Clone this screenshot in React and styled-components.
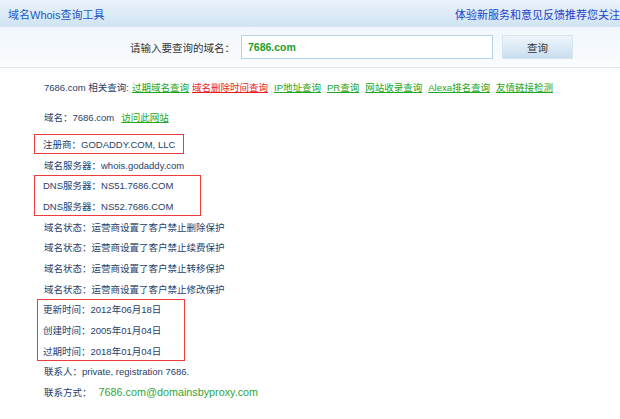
import React from "react";
import styled, { createGlobalStyle } from "styled-components";

const Global = createGlobalStyle`
  html, body { margin: 0; padding: 0; background: #ffffff; }
  body { font-family: "Liberation Sans", "Noto Sans CJK SC", Arial, sans-serif; }
`;

const Page = styled.div`
  width: 620px;
  height: 419px;
  overflow: hidden;
  background: #ffffff;
`;

const Header = styled.div`
  height: 27px;
  display: flex;
  align-items: center;
  justify-content: space-between;
  padding-left: 8px;
  background: linear-gradient(#eaf3fa, #cfe3f2);
  font-size: 11px;
  white-space: nowrap;
  overflow: hidden;
`;

const Title = styled.span`
  color: #2456c8;
`;

const Promo = styled.span`
  color: #1d3fd0;
`;

const SearchRow = styled.div`
  height: 40px;
  display: flex;
  align-items: center;
  background: linear-gradient(#f1f7fc, #fafcfe);
  border-bottom: 1px solid #e2eaf1;
`;

const Label = styled.label`
  width: 235px;
  text-align: right;
  font-size: 10.5px;
  color: #333333;
`;

const Input = styled.div`
  box-sizing: border-box;
  width: 252px;
  height: 24px;
  margin-left: 6px;
  padding-left: 6px;
  display: flex;
  align-items: center;
  background: #ffffff;
  border: 1px solid #b4d2e8;
  color: #1e9e1e;
  font-weight: bold;
  font-size: 10.5px;
`;

const Button = styled.button`
  box-sizing: border-box;
  width: 71px;
  height: 24px;
  margin-left: 9px;
  border: 1px solid #d6e5f1;
  background: linear-gradient(#eef5fb, #c9def0);
  color: #333333;
  font-family: inherit;
  font-size: 10.5px;
  padding: 0;
`;

const Content = styled.div`
  padding: 9px 0 0 44px;
  font-size: 9.5px;
  color: #1f3e6a;
`;

const Row = styled.div`
  height: 20.67px;
  display: flex;
  align-items: center;
  white-space: nowrap;
  margin-bottom: ${(p) => p.$after || 0}px;
`;

const Link = styled.a`
  color: ${(p) => (p.$red ? "#e81c1c" : "#22a522")};
  text-decoration: underline;
  margin-left: ${(p) => p.$gap ?? 6}px;
  cursor: pointer;
`;

const Mail = styled.span`
  color: #2fa53a;
  font-size: 10.8px;
  margin-left: 7px;
`;

const Boxed = styled.div`
  box-sizing: border-box;
  width: ${(p) => p.$w}px;
  margin: 0 0 0 ${(p) => -p.$inset}px;
  padding-left: ${(p) => p.$inset - 1}px;
  outline: 1px solid #ee3b3b;
  outline-offset: -1px;
`;

const links = [
  { t: "过期域名查询", gap: 3 },
  { t: "域名删除时间查询", red: true, gap: 3 },
  { t: "IP地址查询" },
  { t: "PR查询" },
  { t: "网站收录查询" },
  { t: "Alexa排名查询" },
  { t: "友情链接检测" },
];

const statuses = [
  "运营商设置了客户禁止删除保护",
  "运营商设置了客户禁止续费保护",
  "运营商设置了客户禁止转移保护",
  "运营商设置了客户禁止修改保护",
];

export default function App() {
  return (
    <Page>
      <Global />
      <Header>
        <Title>域名Whois查询工具</Title>
        <Promo>体验新服务和意见反馈推荐您关注</Promo>
      </Header>
      <SearchRow>
        <Label>请输入要查询的域名：</Label>
        <Input>7686.com</Input>
        <Button>查询</Button>
      </SearchRow>
      <Content>
        <Row $after={9.3}>
          7686.com 相关查询:
          {links.map((l) => (
            <Link key={l.t} $red={l.red} $gap={l.gap}>
              {l.t}
            </Link>
          ))}
        </Row>
        <Row $after={6}>
          域名：7686.com
          <Link $gap={7}>访问此网站</Link>
        </Row>
        <Boxed $w={150} $inset={10}>
          <Row>注册商：GODADDY.COM, LLC</Row>
        </Boxed>
        <Row>域名服务器：whois.godaddy.com</Row>
        <Boxed $w={167} $inset={10}>
          <Row>DNS服务器：NS51.7686.COM</Row>
          <Row>DNS服务器：NS52.7686.COM</Row>
        </Boxed>
        {statuses.map((s) => (
          <Row key={s}>域名状态：{s}</Row>
        ))}
        <Boxed $w={148} $inset={7}>
          <Row>更新时间：2012年06月18日</Row>
          <Row>创建时间：2005年01月04日</Row>
          <Row>过期时间：2018年01月04日</Row>
        </Boxed>
        <Row>联系人：private, registration 7686.</Row>
        <Row>
          联系方式：<Mail>7686.com@domainsbyproxy.com</Mail>
        </Row>
      </Content>
    </Page>
  );
}
